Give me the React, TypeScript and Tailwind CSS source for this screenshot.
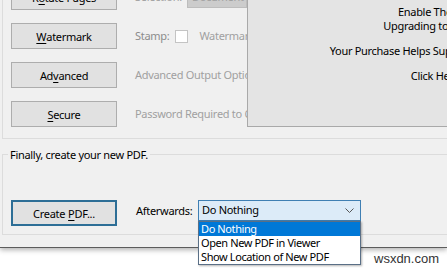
import React from "react";

const font = { fontFamily: '"Noto Sans", "Open Sans", sans-serif' };

function Btn({ pre, u, post }: { pre: string; u: string; post: string }) {
  return (
    <button className="w-[106px] h-[26px] bg-[#e1e1e1] border border-[#adadad] text-[11px] tracking-[-0.3px] text-black flex items-center justify-center leading-none">
      {pre}
      <span className="underline underline-offset-2">{u}</span>
      {post}
    </button>
  );
}

function OptionRow({ children }: { children: React.ReactNode }) {
  return <div className="h-[26px] flex items-center whitespace-nowrap text-[11px] tracking-[-0.3px] text-[#a0a0a0]">{children}</div>;
}

export default function App() {
  return (
    <div className="w-[447px] h-[269px] overflow-hidden relative bg-white" style={font}>
      <div className="h-[248px] bg-[#f0f0f0] border-b border-[#5c5c5c] shadow-[0_2px_5px_rgba(0,0,0,0.3)] pl-[2px] flex flex-col">
        {/* upper options group */}
        <div className="-mt-[20px] h-[159px] shrink-0 border-l border-b border-[#dcdcdc] flex">
          <div className="pl-[8px] pt-[4px] flex flex-col gap-[13px]">
            <Btn pre="R" u="o" post="tate Pages" />
            <Btn pre="" u="W" post="atermark" />
            <Btn pre="Ad" u="v" post="anced" />
            <Btn pre="" u="S" post="ecure" />
          </div>
          <div className="w-[130px] shrink-0 overflow-hidden pl-[18px] pt-[4px] flex flex-col gap-[13px]">
            <OptionRow>
              <span className="w-[52px] shrink-0">Selection:</span>
              <span className="h-[22px] w-[60px] shrink-0 bg-[#cccccc] border border-[#bdbdbd] px-[4px] flex items-center">Document</span>
            </OptionRow>
            <OptionRow>
              <span className="text-[#8c8c8c] shrink-0">Stamp:</span>
              <span className="ml-[6px] w-[13px] h-[13px] shrink-0 bg-white border border-[#c4c4c4]" />
              <span className="ml-[11px] shrink-0">Watermark Text</span>
            </OptionRow>
            <OptionRow>Advanced Output Options</OptionRow>
            <OptionRow>Password Required to Open</OptionRow>
          </div>
          <div className="w-[406px] h-[147px] shrink-0 bg-[#e4e4e4] border border-[#a9a9a9] text-[11px] tracking-[-0.3px] text-black text-center leading-[14px] pt-[24px] whitespace-nowrap">
            <div className="pl-[2px]">Enable These Options</div>
            <div className="pr-[10px]">Upgrading to Pro Version</div>
            <div className="mt-[11px] pr-[8px]">Your Purchase Helps Support Our Development</div>
            <div className="mt-[11px] pl-[4px]">Click Here to Buy</div>
          </div>
        </div>

        {/* final group */}
        <div className="mt-[15px] h-[81px] shrink-0 border-l border-t border-b border-[#dcdcdc] flex flex-col">
          <span className="-mt-[8px] ml-[5px] w-fit px-[2px] bg-[#f0f0f0] text-[11px] tracking-[-0.3px] leading-[16px] text-black">
            Finally, create your new PDF.
          </span>
          <div className="mt-[37px] pl-[8px] flex items-start">
            <button className="w-[106px] h-[26px] bg-[#e1e1e1] border-2 border-[#2d6e96] text-[11px] tracking-[-0.3px] text-black flex items-center justify-center leading-none">
              Create <span className="ml-[3px] underline underline-offset-2">P</span>DF...
            </button>
            <span className="ml-[19px] w-[62px] h-[22px] flex items-center text-[11px] tracking-[-0.3px] text-black">Afterwards:</span>
            <div className="relative w-[163px]">
              <div className="h-[21px] bg-[#dcebf8] border border-[#3f7fb3] flex items-center pl-[3px] pr-[6px] text-[11px] tracking-[-0.3px] text-black">
                <span className="flex-1">Do Nothing</span>
                <svg width="9" height="6" viewBox="0 0 9 6">
                  <polyline points="0.5,0.5 4.5,4.5 8.5,0.5" fill="none" stroke="#555" strokeWidth="1" />
                </svg>
              </div>
              <div className="absolute top-full left-0 w-full z-10 bg-white border border-[#5a6f86] shadow-[1px_1px_2px_rgba(0,0,0,0.3)] text-[11px] tracking-[-0.4px] leading-[14px] text-black">
                <div className="bg-[#0078d7] text-white pl-[2px]">Do Nothing</div>
                <div className="pl-[2px]">Open New PDF in Viewer</div>
                <div className="pl-[2px]">Show Location of New PDF</div>
              </div>
            </div>
          </div>
        </div>
      </div>
      <div className="pl-[374px] pt-[3px] text-[13px] leading-[16px] text-[#333]" style={{ fontFamily: '"Liberation Sans", Arial, sans-serif' }}>
        wsxdn.com
      </div>
    </div>
  );
}
